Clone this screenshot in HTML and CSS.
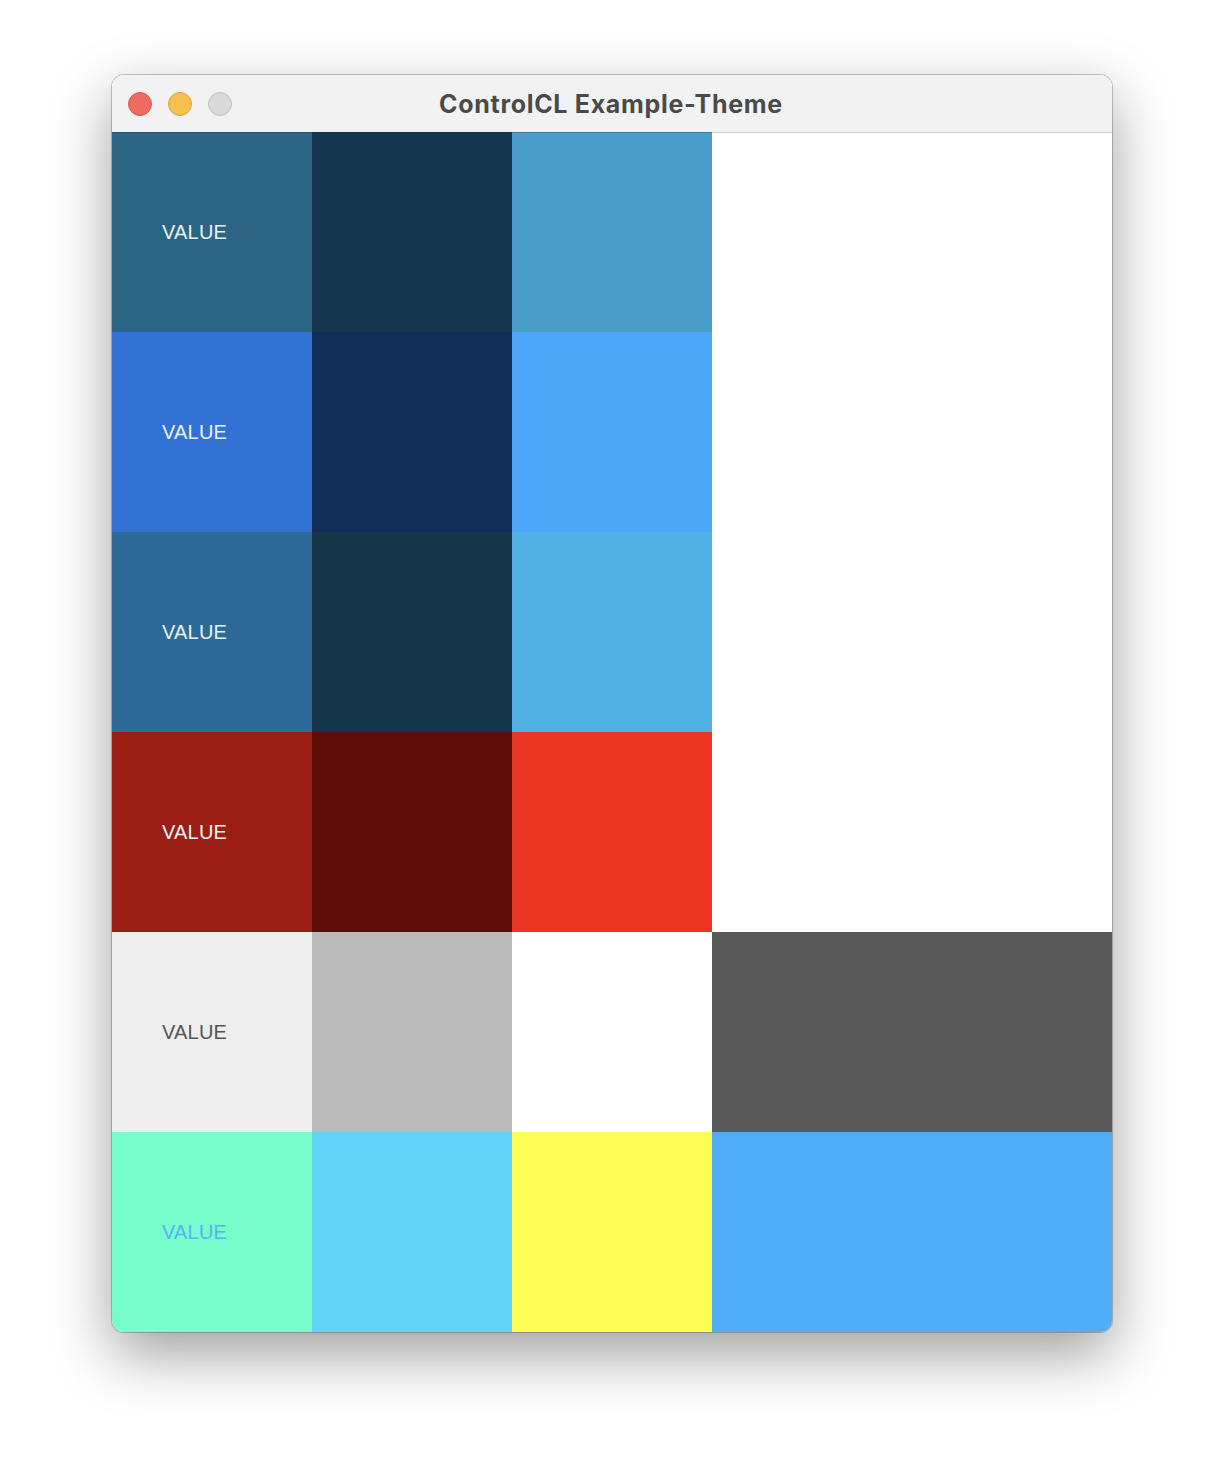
FILE: index.html
```html
<!DOCTYPE html>
<html>
<head>
<meta charset="utf-8">
<link rel="stylesheet" href="styles.css">
</head>
<body>
<div class="window">
  <div class="titlebar">
    <div class="lights">
      <span class="light red"></span>
      <span class="light yellow"></span>
      <span class="light gray"></span>
    </div>
    <div class="title">ControlCL Example-Theme</div>
  </div>
  <div class="grid">
    <div class="cell c11"><span class="val light-text">VALUE</span></div>
    <div class="cell c12"></div>
    <div class="cell c13"></div>
    <div class="cell blank"></div>

    <div class="cell c21"><span class="val light-text">VALUE</span></div>
    <div class="cell c22"></div>
    <div class="cell c23"></div>
    <div class="cell blank"></div>

    <div class="cell c31"><span class="val light-text">VALUE</span></div>
    <div class="cell c32"></div>
    <div class="cell c33"></div>
    <div class="cell blank"></div>

    <div class="cell c41"><span class="val light-text">VALUE</span></div>
    <div class="cell c42"></div>
    <div class="cell c43"></div>
    <div class="cell blank"></div>

    <div class="cell c51"><span class="val dark-text">VALUE</span></div>
    <div class="cell c52"></div>
    <div class="cell c53"></div>
    <div class="cell c54"></div>

    <div class="cell c61"><span class="val blue-text">VALUE</span></div>
    <div class="cell c62"></div>
    <div class="cell c63"></div>
    <div class="cell c64"></div>
  </div>
</div>
</body>
</html>
```

FILE: styles.css
```css
html, body {
  margin: 0;
  padding: 0;
  background: #ffffff;
}
body {
  width: 1224px;
  height: 1480px;
  overflow: hidden;
}
.window {
  margin: 75px 0 0 112px;
  width: 1000px;
  border-radius: 12px;
  overflow: hidden;
  background: #ffffff;
  box-shadow: 0 0 0 1px rgba(0,0,0,0.22), 0 22px 60px rgba(0,0,0,0.38);
}
.titlebar {
  height: 57px;
  background: #f2f2f2;
  display: flex;
  align-items: center;
  position: relative;
}
.lights {
  display: flex;
  gap: 16px;
  padding-left: 16px;
}
.light {
  width: 22px;
  height: 22px;
  border-radius: 50%;
  display: block;
}
.red { background: #ef6b5f; border: 1px solid #d9574c; }
.yellow { background: #f6c04f; border: 1px solid #dea73a; }
.gray { background: #d9d9d9; border: 1px solid #c4c4c4; }
.title {
  position: absolute;
  left: 0;
  right: 0;
  top: 0;
  bottom: 0;
  display: flex;
  align-items: center;
  justify-content: center;
  font-family: Inter, "Noto Sans", sans-serif;
  font-weight: 700;
  font-size: 25px;
  letter-spacing: 0.7px;
  color: #4a4a4a;
  padding-right: 2px;
}
.grid {
  display: grid;
  grid-template-columns: 200px 200px 200px 400px;
  grid-auto-rows: 200px;
  position: relative;
}
.grid::before {
  content: "";
  position: absolute;
  left: 0;
  right: 0;
  top: 0;
  height: 1px;
  background: rgba(0,0,0,0.18);
}
.cell {
  display: flex;
  align-items: center;
}
.val {
  font-family: "Liberation Sans", Arial, sans-serif;
  font-size: 20px;
  padding-left: 50px;
  letter-spacing: 0.2px;
}
.light-text { color: #e8f1f8; }
.dark-text { color: #555555; }
.blue-text { color: #5bb0f7; }
.blank { background: #ffffff; }
.c11 { background: #2c6484; }
.c12 { background: #15364f; }
.c13 { background: #4a9dc9; }
.c21 { background: #3272d4; }
.c22 { background: #0f2d57; }
.c23 { background: #4da6f8; }
.c31 { background: #2e6a97; }
.c32 { background: #15354b; }
.c33 { background: #51b1e4; }
.c41 { background: #9a1e13; }
.c42 { background: #5c0d07; }
.c43 { background: #ea3524; }
.c51 { background: #eeeeee; }
.c52 { background: #bbbbbb; }
.c53 { background: #ffffff; }
.c54 { background: #595959; }
.c61 { background: #77fccb; }
.c62 { background: #62d4f9; }
.c63 { background: #fefd55; }
.c64 { background: #4faef7; }
```
